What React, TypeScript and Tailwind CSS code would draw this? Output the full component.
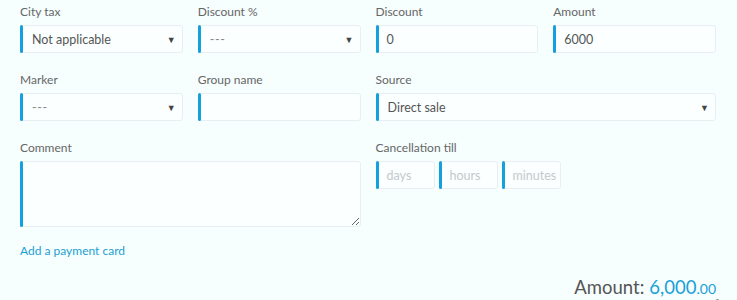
import React from 'react';

const font = { fontFamily: 'Lato, "Open Sans", sans-serif' };

function Label({ children }: { children: React.ReactNode }) {
  return <div className="h-5 mb-1 pt-px leading-5 text-[12px] text-[#666]">{children}</div>;
}

function Box({ children, className = '' }: { children?: React.ReactNode; className?: string }) {
  return (
    <div className={`relative h-[28px] pt-[2px] rounded-[3px] border border-[#e7eff1] bg-[#fbffff] flex items-center ${className}`}>
      <span className="absolute -left-px -top-px -bottom-px w-[3px] rounded-[2px] bg-[#14a0dc]" />
      {children}
    </div>
  );
}

function Select({ value, muted }: { value: string; muted?: boolean }) {
  return (
    <Box className="pl-[11px] pr-[6px] justify-between">
      <span className={`text-[12.5px] ${muted ? 'text-[#888] tracking-wider' : 'text-[#555]'}`}>{value}</span>
      <span className="text-[9px] text-[#444]">▼</span>
    </Box>
  );
}

function Input({ value, placeholder, className = '' }: { value?: string; placeholder?: string; className?: string }) {
  return (
    <Box className={`pl-[10px] ${className}`}>
      {value ? (
        <span className="text-[12.5px] text-[#555]">{value}</span>
      ) : (
        <span className="text-[12.5px] text-[#c4c9cb]">{placeholder}</span>
      )}
    </Box>
  );
}

export default function App() {
  return (
    <div style={font} className="w-full h-[300px] overflow-hidden bg-[#f6fefe]">
      <div className="pl-5 pr-[21px] pt-px">
        <div className="grid grid-cols-4 gap-x-[15px] gap-y-4">
          <div>
            <Label>City tax</Label>
            <Select value="Not applicable" />
          </div>
          <div>
            <Label>Discount %</Label>
            <Select value="---" muted />
          </div>
          <div>
            <Label>Discount</Label>
            <Input value="0" />
          </div>
          <div>
            <Label>Amount</Label>
            <Input value="6000" />
          </div>

          <div>
            <Label>Marker</Label>
            <Select value="---" muted />
          </div>
          <div>
            <Label>Group name</Label>
            <Input />
          </div>
          <div className="col-span-2">
            <Label>Source</Label>
            <Select value="Direct sale" />
          </div>

          <div className="col-span-2">
            <Label>Comment</Label>
            <div className="relative">
              <span className="absolute left-0 top-0 bottom-0 w-[3px] rounded-[2px] bg-[#14a0dc]" />
              <textarea className="block w-full h-[66px] rounded-[3px] border border-[#e7eff1] bg-[#fbffff] outline-none" />
            </div>
          </div>
          <div className="col-span-2">
            <Label>Cancellation till</Label>
            <div className="flex gap-1">
              <Input placeholder="days" className="w-[59px]" />
              <Input placeholder="hours" className="w-[59px]" />
              <Input placeholder="minutes" className="w-[59px]" />
            </div>
          </div>
        </div>

        <div className="mt-4 leading-4 text-[12px] text-[#1d9fd4]">Add a payment card</div>

        <div className="mt-4 flex justify-end items-baseline leading-6 text-[18.5px] text-[#555]">
          <span>Amount:</span>
          <span className="ml-[5px] text-[#1aa0d8]">6,000</span>
          <span className="text-[14px] text-[#1aa0d8]">.00</span>
        </div>
      </div>
      <div className="-mt-[7px] ml-[712px] whitespace-nowrap text-[16px] leading-5 text-[#888]">Avz</div>
    </div>
  );
}
